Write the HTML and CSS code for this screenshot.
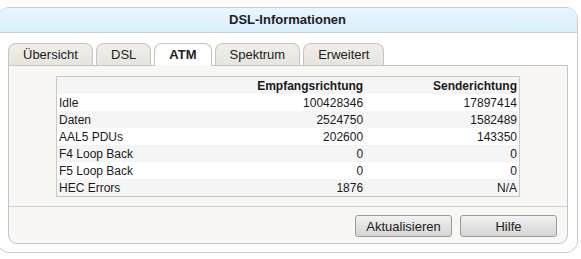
FILE: index.html
```html
<!DOCTYPE html>
<html lang="de">
<head>
    <meta charset="UTF-8">
    <title>DSL-Informationen</title>
    <link rel="stylesheet" href="styles.css">
</head>
<body>
    <div class="box">
        <div class="box-head">DSL-Informationen</div>
        <ul class="tabs">
            <li class="tab">Übersicht</li>
            <li class="tab">DSL</li>
            <li class="tab active">ATM</li>
            <li class="tab">Spektrum</li>
            <li class="tab">Erweitert</li>
        </ul>
        <div class="panel">
            <div class="panel-body">
                <table class="stats">
                    <colgroup>
                        <col class="c1"><col class="c2"><col class="c3">
                    </colgroup>
                    <tr class="head">
                        <th></th>
                        <th>Empfangsrichtung</th>
                        <th>Senderichtung</th>
                    </tr>
                    <tr><td>Idle</td><td>100428346</td><td>17897414</td></tr>
                    <tr><td>Daten</td><td>2524750</td><td>1582489</td></tr>
                    <tr><td>AAL5 PDUs</td><td>202600</td><td>143350</td></tr>
                    <tr><td>F4 Loop Back</td><td>0</td><td>0</td></tr>
                    <tr><td>F5 Loop Back</td><td>0</td><td>0</td></tr>
                    <tr><td>HEC Errors</td><td>1876</td><td>N/A</td></tr>
                </table>
            </div>
            <div class="panel-foot">
                <button class="btn">Aktualisieren</button>
                <button class="btn">Hilfe</button>
            </div>
        </div>
    </div>
</body>
</html>
```

FILE: styles.css
```css
body {
    margin: 0;
    background-color: #fff;
    font-family: "Liberation Sans", Arial, sans-serif;
    font-size: 12px;
    color: #1a1a1a;
}

.box {
    margin: 7px 0 0 -3px;
    width: 579px;
    height: 244px;
    border: 1px solid #cdcdcd;
    border-radius: 12px;
    overflow: hidden;
    background-color: #fff;
}

.box-head {
    height: 24px;
    line-height: 24px;
    text-align: center;
    font-weight: bold;
    font-size: 13px;
    color: #222;
    background: linear-gradient(#e9f6fe, #d9eefb);
    border-bottom: 1px solid #c5d3dc;
}

.tabs {
    display: flex;
    gap: 3px;
    list-style: none;
    margin: 10px 0 0 10px;
    padding: 0;
    height: 22px;
}

.tab {
    height: 21px;
    line-height: 21px;
    padding: 0 14px;
    font-size: 13px;
    color: #222;
    background: linear-gradient(#f1efea, #e6e4dd);
    border: 1px solid #c4c4c4;
    border-bottom: none;
    border-radius: 8px 8px 0 0;
}

.tab:nth-child(1) { width: 55px; }

.tab.active {
    font-weight: bold;
    background: #fff;
    height: 22px;
    position: relative;
    z-index: 1;
}

.panel {
    margin: 0 9px 0 10px;
    height: 177px;
    border: 1px solid #c4c4c4;
    border-radius: 0 0 9px 9px;
    background-color: #f8f7f3;
    display: flex;
    flex-direction: column;
}

.panel-body {
    padding: 10px 0 0 47px;
    height: 130px;
    border-bottom: 1px solid #cfcfcf;
}

.stats {
    border-collapse: collapse;
    table-layout: fixed;
    width: 464px;
    border: 1px solid #cacaca;
    background-color: #fff;
}

.c1 { width: 150px; }
.c2 { width: 158px; }
.c3 { width: 154px; }

.stats th,
.stats td {
    height: 17px;
    padding: 0 2px;
    font-size: 12px;
    white-space: nowrap;
}

.stats th {
    font-weight: bold;
    text-align: right;
}

.stats td:first-child { text-align: left; }
.stats td { text-align: right; }

.stats tr.head { background-color: #f6f6f6; }
.stats tr:nth-child(odd) { background-color: #f5f5f5; }

.panel-foot {
    display: flex;
    justify-content: flex-end;
    gap: 8px;
    padding: 8px 10px 0 0;
}

.btn {
    width: 97px;
    height: 22px;
    font-family: "Liberation Sans", Arial, sans-serif;
    font-size: 13px;
    color: #222;
    border: 1px solid #9a9a9a;
    border-radius: 3px;
    background: linear-gradient(#f4f4f4, #e2e2e2 50%, #d6d6d6);
    cursor: pointer;
}
```
